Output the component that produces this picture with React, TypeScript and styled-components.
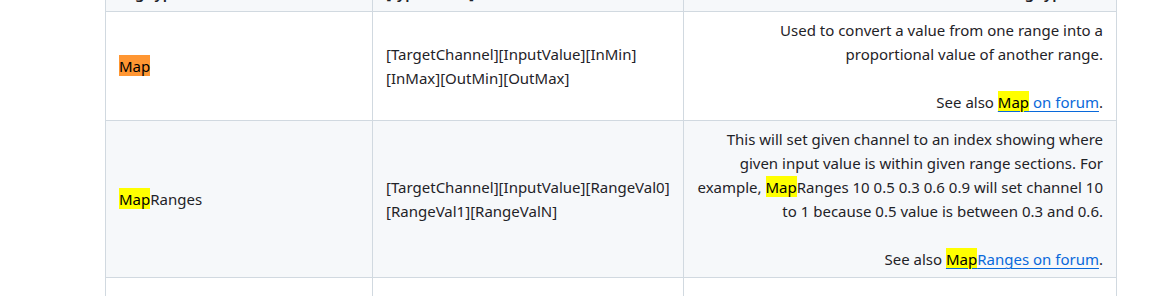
import styled, { createGlobalStyle } from "styled-components";

const GlobalStyle = createGlobalStyle`
  html, body {
    margin: 0;
    padding: 0;
    background: #ffffff;
  }
  body {
    font-family: "Noto Sans", "Open Sans", Arial, sans-serif;
    color: #1f2328;
    overflow: hidden;
  }
`;

interface CommandRow {
  name: string;
  highlight: "active" | "match";
  args: string[];
  description: string[];
  forumRest: string;
}

const rows: CommandRow[] = [
  {
    name: "",
    highlight: "active",
    args: ["[TargetChannel][InputValue][InMin]", "[InMax][OutMin][OutMax]"],
    description: [
      "Used to convert a value from one range into a",
      "proportional value of another range.",
    ],
    forumRest: " on forum",
  },
  {
    name: "Ranges",
    highlight: "match",
    args: ["[TargetChannel][InputValue][RangeVal0]", "[RangeVal1][RangeValN]"],
    description: [
      "This will set given channel to an index showing where",
      "given input value is within given range sections. For",
      "@Ranges 10 0.5 0.3 0.6 0.9 will set channel 10",
      "to 1 because 0.5 value is between 0.3 and 0.6.",
    ],
    forumRest: "Ranges on forum",
  },
];

const App = () => {
  return (
    <>
      <GlobalStyle />
      <Page>
        <Table>
          <colgroup>
            <col style={{ width: 267 }} />
            <col style={{ width: 311 }} />
            <col />
          </colgroup>
          <thead>
            <HeadRow>
              <HeadCell>Tag type</HeadCell>
              <HeadCell>[type mode]</HeadCell>
              <HeadCell $right>Setting type info</HeadCell>
            </HeadRow>
          </thead>
          <tbody>
            {rows.map((row, i) => (
              <Row key={i} $muted={i % 2 === 1}>
                <Cell>
                  <Hit $active={row.highlight === "active"}>Map</Hit>
                  {row.name}
                </Cell>
                <Cell>
                  {row.args.map((a, j) => (
                    <span key={j}>
                      {a}
                      {j < row.args.length - 1 && <br />}
                    </span>
                  ))}
                </Cell>
                <Cell $right>
                  {row.description.map((line, j) => (
                    <span key={j}>
                      {line.startsWith("@") ? (
                        <>
                          example, <Hit>Map</Hit>
                          {line.slice(1)}
                        </>
                      ) : (
                        line
                      )}
                      <br />
                    </span>
                  ))}
                  <br />
                  See also{" "}
                  <ForumLink href="#">
                    <Hit>Map</Hit>
                    {row.forumRest}
                  </ForumLink>
                  .
                </Cell>
              </Row>
            ))}
            <Row>
              <Cell>&nbsp;</Cell>
              <Cell>&nbsp;</Cell>
              <Cell $right>&nbsp;</Cell>
            </Row>
          </tbody>
        </Table>
      </Page>
    </>
  );
};

const Page = styled.div`
  padding-left: 105px;
  width: 1149px;
  height: 296px;
  box-sizing: border-box;
  overflow: hidden;
`;

const Table = styled.table`
  width: 1012px;
  margin-top: -26px;
  border-collapse: collapse;
  border-spacing: 0;
  table-layout: fixed;
  font-size: 15px;
  line-height: 24px;
`;

const HeadRow = styled.tr`
  background: #f6f8fa;
`;

const HeadCell = styled.th<{ $right?: boolean }>`
  padding: 6px 13px;
  border: 1px solid #d1d9e0;
  font-weight: 600;
  text-align: ${(p) => (p.$right ? "right" : "left")};
`;

const Row = styled.tr<{ $muted?: boolean }>`
  background: ${(p) => (p.$muted ? "#f6f8fa" : "#ffffff")};
`;

const Cell = styled.td<{ $right?: boolean }>`
  padding: 6px 13px;
  border: 1px solid #d1d9e0;
  vertical-align: middle;
  text-align: ${(p) => (p.$right ? "right" : "left")};
  white-space: nowrap;
`;

const Hit = styled.mark<{ $active?: boolean }>`
  background: ${(p) => (p.$active ? "#ff9632" : "#ffff00")};
  color: #000000;
  padding: 1px 0 0;
`;

const ForumLink = styled.a`
  color: #0969da;
  text-decoration: underline;
  text-underline-offset: 3px;
`;

export default App;
